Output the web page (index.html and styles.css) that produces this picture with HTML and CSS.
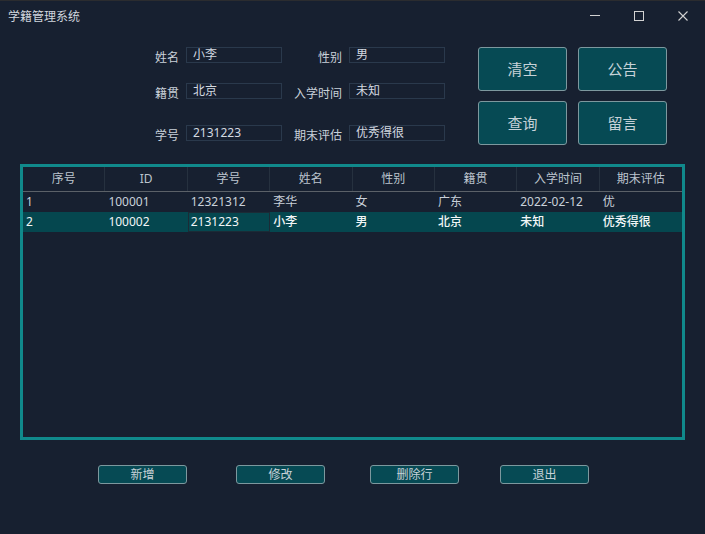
FILE: index.html
```html
<!DOCTYPE html>
<html lang="zh">
<head>
<meta charset="utf-8">
<title>学籍管理系统</title>
<link rel="stylesheet" href="styles.css">
</head>
<body>
<div class="window">
  <div class="titlebar">
    <div class="title">学籍管理系统</div>
    <div class="controls">
      <svg class="ctl" width="10" height="10" viewBox="0 0 10 10"><line x1="0" y1="4.5" x2="10" y2="4.5" stroke="#d2d2d2" stroke-width="1"/></svg>
      <svg class="ctl" width="10" height="10" viewBox="0 0 10 10"><rect x="0.5" y="0.5" width="9" height="9" fill="none" stroke="#d2d2d2" stroke-width="1"/></svg>
      <svg class="ctl" width="10" height="10" viewBox="0 0 10 10"><path d="M0.5 0.5 L9.5 9.5 M9.5 0.5 L0.5 9.5" stroke="#d2d2d2" stroke-width="1.1"/></svg>
    </div>
  </div>

  <div class="top">
    <div class="fields">
      <div class="label">姓名</div><div class="input">小李</div>
      <div class="label">性别</div><div class="input">男</div>
      <div class="label">籍贯</div><div class="input">北京</div>
      <div class="label">入学时间</div><div class="input">未知</div>
      <div class="label">学号</div><div class="input">2131223</div>
      <div class="label">期末评估</div><div class="input">优秀得很</div>
    </div>
    <div class="actions">
      <button class="big">清空</button>
      <button class="big">公告</button>
      <button class="big">查询</button>
      <button class="big">留言</button>
    </div>
  </div>

  <div class="table">
    <div class="thead">
      <div class="th">序号</div><div class="th">ID</div><div class="th">学号</div><div class="th">姓名</div>
      <div class="th">性别</div><div class="th">籍贯</div><div class="th">入学时间</div><div class="th">期末评估</div>
    </div>
    <div class="row">
      <div class="td">1</div><div class="td">100001</div><div class="td">12321312</div><div class="td">李华</div>
      <div class="td">女</div><div class="td">广东</div><div class="td">2022-02-12</div><div class="td">优</div>
    </div>
    <div class="row selected">
      <div class="td">2</div><div class="td">100002</div><div class="td focus">2131223</div><div class="td cjk">小李</div>
      <div class="td cjk">男</div><div class="td cjk">北京</div><div class="td cjk">未知</div><div class="td cjk">优秀得很</div>
    </div>
  </div>

  <div class="bottom">
    <button class="small b1">新增</button>
    <button class="small b2">修改</button>
    <button class="small b3">删除行</button>
    <button class="small b4">退出</button>
  </div>
</div>
</body>
</html>
```

FILE: styles.css
```css
* { box-sizing: border-box; }
html, body {
  margin: 0;
  padding: 0;
  background: #172030;
}
body {
  width: 705px;
  height: 534px;
  overflow: hidden;
  font-family: "Noto Sans", "Noto Sans CJK SC", sans-serif;
  font-size: 12px;
  color: #c9d1da;
}
.window {
  width: 705px;
  height: 534px;
  border-top: 1px solid #2b2c2f;
}
.titlebar {
  display: flex;
  align-items: flex-start;
  height: 46px;
}
.title {
  padding: 9px 0 0 8px;
  line-height: 14px;
  font-size: 12px;
  color: #d0d6de;
}
.controls {
  margin-left: auto;
  display: flex;
  gap: 34px;
  padding: 10px 17px 0 0;
}
.ctl { display: block; }

.top {
  display: flex;
  align-items: flex-start;
}
.fields {
  margin-left: 140px;
  display: grid;
  grid-template-columns: 46px 96px 67px 96px;
  grid-template-rows: 36px 42px 16px;
  align-items: start;
}
.label {
  text-align: right;
  padding-right: 7px;
  padding-top: 3px;
  line-height: 16px;
  white-space: nowrap;
  color: #c9d1da;
}
.input {
  height: 16px;
  border: 1px solid #2a394c;
  padding: 0 6px;
  line-height: 13px;
  color: #d3d9e0;
  white-space: nowrap;
}
.actions {
  margin-left: 33px;
  display: grid;
  grid-template-columns: 89px 89px;
  grid-auto-rows: 44px;
  column-gap: 11px;
  row-gap: 10px;
}
button {
  font-family: inherit;
  background: #064a54;
  border: 1px solid #7d989e;
  border-radius: 3px;
  color: #c6d2d8;
  padding: 0;
  margin: 0;
}
.big {
  font-size: 15px;
  line-height: 20px;
}

.table {
  margin: 19px 0 0 20px;
  width: 665px;
  height: 276px;
  border: 3px solid #10898b;
}
.thead {
  display: grid;
  grid-template-columns: repeat(8, 1fr);
  height: 25px;
  border-bottom: 1px solid #5b6168;
}
.th {
  text-align: center;
  line-height: 24px;
  color: #bcc4ce;
  border-right: 1px solid #26313f;
}
.th:last-child { border-right: none; }
.row {
  display: grid;
  grid-template-columns: repeat(8, 1fr);
  height: 20px;
}
.td {
  padding: 0 3px;
  line-height: 20px;
  white-space: nowrap;
  color: #c9d1da;
}
.selected {
  background: #05474f;
}
.selected .td {
  color: #f2f6f7;
}
.selected .cjk {
  font-weight: 500;
}
.selected .focus {
  box-shadow: inset 0 0 0 1px #1b2b36;
}

.bottom {
  display: flex;
  margin-top: 25px;
  height: 19px;
}
.small {
  width: 89px;
  height: 19px;
  font-size: 12px;
  line-height: 16px;
}
.b1 { margin-left: 98px; }
.b2 { margin-left: 49px; }
.b3 { margin-left: 45px; }
.b4 { margin-left: 41px; }
```
